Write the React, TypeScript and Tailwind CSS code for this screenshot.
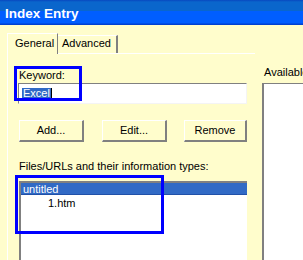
import React from "react";

const Btn: React.FC<{ label: string; className?: string }> = ({ label, className }) => (
  <div
    className={`h-[22px] flex items-center justify-center border-t border-l border-white border-r-2 border-b-2 border-r-[#808080] border-b-[#808080] ${className ?? ""}`}
  >
    {label}
  </div>
);

export default function App() {
  return (
    <div className="relative w-[303px] h-[260px] overflow-hidden bg-[#fffdcc] text-black text-[11px] leading-[13px] font-['Liberation_Sans',Arial,sans-serif]">
      {/* caption */}
      <div className="h-[25px] px-[5px] pt-[6px] bg-[linear-gradient(to_bottom,#0848c0_0px,#0a66cc_2px,#0a66cc_11px,#005eff_11px,#005eff_23px,#0040d0_24px)]">
        <span className="text-white font-bold text-[13.5px] leading-4">Index Entry</span>
      </div>

      <div className="flex pt-[8px] h-[235px]">
        {/* tab control */}
        <div className="w-[255px] shrink-0 pl-[7px] flex flex-col">
          <div className="flex items-end h-[20px]">
            <div className="relative z-10 w-[51px] h-[21px] -mb-px bg-[#fffdcc] border-t border-l border-white border-r border-r-[#808080] pl-[7px] pt-[3px]">
              General
            </div>
            <div className="w-[60px] h-[18px] border-t border-white border-r-2 border-r-[#808080] pl-[4px] pt-[1px]">
              Advanced
            </div>
          </div>
          <div className="flex-1 flex flex-col border-t border-l border-white">
            <div className="ml-[11px] mt-[15px]">Keyword:</div>
            <div className="ml-[10px] mt-[1px] w-[229px] h-[21px] bg-white border-t border-l border-[#808080] border-r border-b border-r-[#f4f4f4] border-b-[#f4f4f4] flex items-center pl-[3px]">
              <span className="bg-[#316ac5] text-white px-px leading-[11px]">Excel</span>
              <span className="w-px h-[11px] bg-black" />
            </div>
            <div className="flex ml-[11px] mt-[16px]">
              <Btn label="Add..." className="w-[65px]" />
              <Btn label="Edit..." className="w-[65px] ml-[18px]" />
              <Btn label="Remove" className="w-[63px] ml-[17px]" />
            </div>
            <div className="ml-[11px] mt-[18px]">Files/URLs and their information types:</div>
            <div className="ml-[11px] mt-[8px] w-[228px] flex-1 bg-white border-t-2 border-l-2 border-[#808080]">
              <div className="h-[12px] bg-[#316ac5] border-b border-[#2050a8] text-white pl-[2px] leading-[12px]">untitled</div>
              <div className="pl-[27px] pt-[2px]">1.htm</div>
            </div>
          </div>
        </div>

        {/* right column */}
        <div className="ml-[7px] min-w-0 flex-1 flex flex-col">
          <div className="mt-[33px] pl-[2px] whitespace-nowrap">Available</div>
          <div className="mt-[4px] flex-1 bg-white border-t border-l-2 border-[#808080]" />
        </div>
      </div>

      {/* annotation rectangles */}
      <div className="absolute left-[14px] top-[66px] w-[68px] h-[35px] border-[3px] border-[#0000ff]" />
      <div className="absolute left-[15px] top-[175px] w-[149px] h-[59px] border-[3px] border-[#0000ff]" />
    </div>
  );
}
